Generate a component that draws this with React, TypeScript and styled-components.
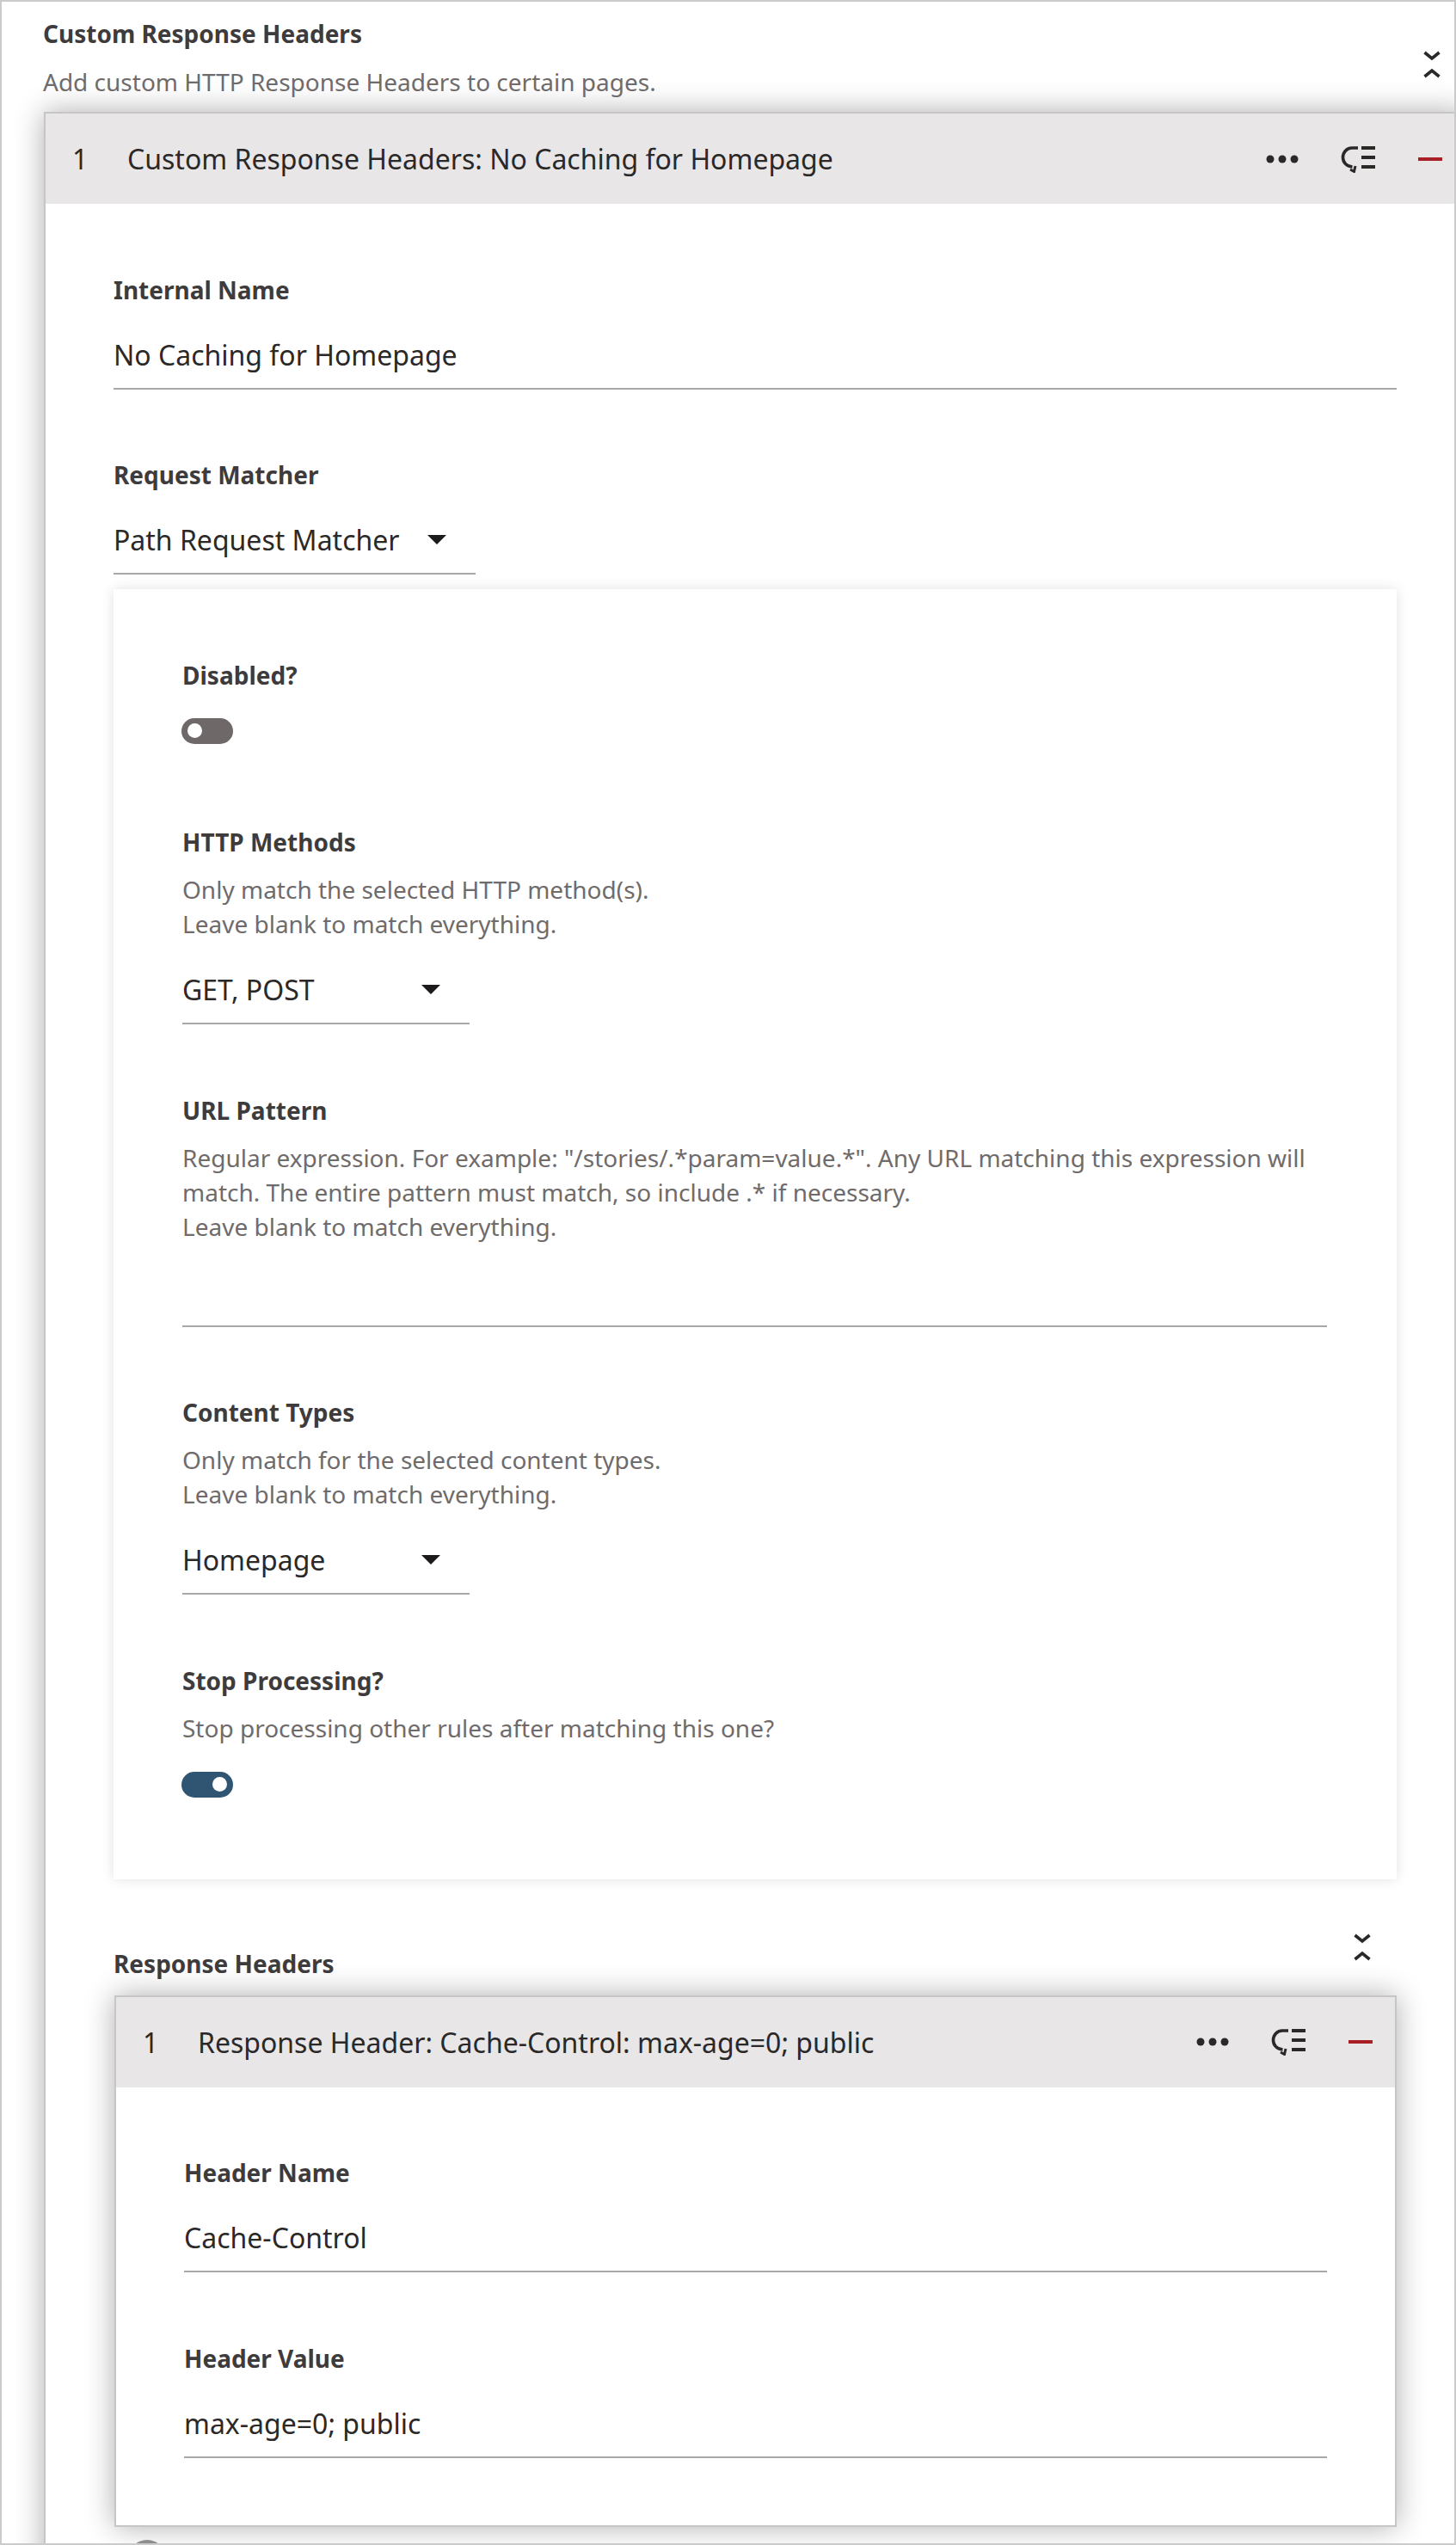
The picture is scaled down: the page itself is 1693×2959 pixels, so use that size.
import React from 'react';
import styled, { createGlobalStyle } from 'styled-components';

const GlobalStyle = createGlobalStyle`
  html, body {
    margin: 0;
    padding: 0;
    background: #fff;
  }
  * {
    box-sizing: border-box;
  }
`;

function ChevronsIcon() {
  return (
    <svg width="20" height="34" viewBox="0 0 20 34" fill="none" stroke="#2b2828" strokeWidth="3.6">
      <path d="M1.5 3l8.5 7 8.5-7" />
      <path d="M1.5 31l8.5-7 8.5 7" />
    </svg>
  );
}

function DotsIcon() {
  return (
    <svg width="38" height="10" viewBox="0 0 38 10" fill="#2b2828">
      <circle cx="5" cy="5" r="4.5" />
      <circle cx="19" cy="5" r="4.5" />
      <circle cx="33" cy="5" r="4.5" />
    </svg>
  );
}

function CollapseAllIcon() {
  return (
    <svg width="41" height="32" viewBox="0 0 41 32" fill="none" stroke="#2b2828">
      <path d="M20 3h-7C6.500 3 2.500 8.500 2.500 14s4 10.500 11 11" strokeWidth="3.6" />
      <path d="M11 28l4.500 2.500 1.500-6.500" strokeWidth="3" />
      <path d="M24 3h16M24 14h16M24 25h16" strokeWidth="4" />
    </svg>
  );
}

function MinusIcon() {
  return (
    <svg width="28" height="4" viewBox="0 0 28 4">
      <rect width="28" height="4" fill="#a81f25" />
    </svg>
  );
}

function Caret() {
  return (
    <svg width="22" height="11" viewBox="0 0 22 11">
      <path d="M0 0h22L11 11z" fill="#1c1a1a" />
    </svg>
  );
}

type RepeaterProps = {
  title: string;
  children: React.ReactNode;
};

function RepeaterCard({ title, children }: RepeaterProps) {
  return (
    <Card>
      <CardHeader>
        <CardNumber>1</CardNumber>
        <CardTitle>{title}</CardTitle>
        <CardActions>
          <DotsIcon />
          <CollapseAllIcon />
          <MinusIcon />
        </CardActions>
      </CardHeader>
      <CardBody>{children}</CardBody>
    </Card>
  );
}

export default function App() {
  return (
    <>
      <GlobalStyle />
      <Frame>
        <Head>
          <div>
            <Label>Custom Response Headers</Label>
            <HeadDescription>Add custom HTTP Response Headers to certain pages.</HeadDescription>
          </div>
          <ChevronsIcon />
        </Head>

        <OuterWrap>
          <RepeaterCard title="Custom Response Headers: No Caching for Homepage">
            <Field>
              <Label>Internal Name</Label>
              <Input>No Caching for Homepage</Input>
            </Field>

            <Field>
              <Label>Request Matcher</Label>
              <Select $width={421}>
                Path Request Matcher
                <Caret />
              </Select>
            </Field>

            <Panel>
              <ToggleField>
                <Label>Disabled?</Label>
                <Toggle />
              </ToggleField>

              <Field>
                <Label>HTTP Methods</Label>
                <Description>
                  Only match the selected HTTP method(s).
                  <br />
                  Leave blank to match everything.
                </Description>
                <Select $width={334}>
                  GET, POST
                  <Caret />
                </Select>
              </Field>

              <Field>
                <Label>URL Pattern</Label>
                <Description>
                  Regular expression. For example: "/stories/.*param=value.*". Any URL matching this expression will
                  <br />
                  match. The entire pattern must match, so include .* if necessary.
                  <br />
                  Leave blank to match everything.
                </Description>
                <Input />
              </Field>

              <Field>
                <Label>Content Types</Label>
                <Description>
                  Only match for the selected content types.
                  <br />
                  Leave blank to match everything.
                </Description>
                <Select $width={334}>
                  Homepage
                  <Caret />
                </Select>
              </Field>

              <ToggleField>
                <Label>Stop Processing?</Label>
                <Description>Stop processing other rules after matching this one?</Description>
                <Toggle $on />
              </ToggleField>
            </Panel>

            <RepeaterHead>
              <Label>Response Headers</Label>
              <ChevronsIcon />
            </RepeaterHead>

            <InnerWrap>
              <RepeaterCard title="Response Header: Cache-Control: max-age=0; public">
                <Field>
                  <Label>Header Name</Label>
                  <Input>Cache-Control</Input>
                </Field>
                <Field>
                  <Label>Header Value</Label>
                  <Input>max-age=0; public</Input>
                </Field>
              </RepeaterCard>
            </InnerWrap>

            <AddButton />
          </RepeaterCard>
        </OuterWrap>
      </Frame>
    </>
  );
}

const Frame = styled.div`
  height: 2959px;
  border: 2px solid #cbcbcb;
  overflow: hidden;
  font-family: "Noto Sans", "Open Sans", sans-serif;
  background: #fff;
`;

const Head = styled.header`
  display: flex;
  justify-content: space-between;
  padding: 18px 16px 0 48px;
  svg {
    margin-top: 38px;
  }
`;

const Label = styled.div`
  font-size: 28px;
  line-height: 38px;
  font-weight: 700;
  color: #3e3b3c;
`;

const Description = styled.div`
  margin: 16px 0 1px;
  font-size: 28px;
  line-height: 40px;
  color: #6f6b6b;
`;

const HeadDescription = styled(Description)`
  margin: 18px 0 0;
  line-height: 38px;
`;

const OuterWrap = styled.div`
  margin: 16px -14px 0 49px;
`;

const InnerWrap = styled.div`
  padding-left: 1px;
`;

const Card = styled.section`
  border: 2px solid #c6c6c6;
  background: #fff;
  box-shadow: 0 0 32px rgba(0, 0, 0, 0.32);
`;

const CardHeader = styled.div`
  display: flex;
  align-items: center;
  height: 105px;
  padding: 0 26px 0 31px;
  background: #e8e6e7;
`;

const CardNumber = styled.span`
  width: 64px;
  font-size: 32px;
  color: #2b2828;
`;

const CardTitle = styled.span`
  flex: 1;
  font-size: 32px;
  color: #2b2828;
`;

const CardActions = styled.div`
  display: flex;
  align-items: center;
  gap: 49px;
`;

const CardBody = styled.div`
  padding: 0 79px 78px;
`;

const Field = styled.div`
  padding-top: 80.5px;
`;

const ToggleField = styled(Field)`
  padding-bottom: 16px;
`;

const Input = styled.div`
  display: flex;
  align-items: center;
  height: 79px;
  margin-top: 18px;
  border-bottom: 2px solid #a9a7a8;
  font-size: 32px;
  color: #2b2828;
`;

const Select = styled(Input)<{ $width: number }>`
  justify-content: space-between;
  width: ${(p) => p.$width}px;
  padding-right: 34px;
`;

const Panel = styled.div`
  margin-top: 17px;
  padding: 0 81px 80px 80px;
  background: #fff;
  box-shadow: 0 0 14px rgba(0, 0, 0, 0.12);
`;

const Toggle = styled.div<{ $on?: boolean }>`
  display: flex;
  align-items: center;
  justify-content: ${(p) => (p.$on ? 'flex-end' : 'flex-start')};
  width: 60px;
  height: 30px;
  margin: 31px 0 -1px -1px;
  padding: 0 7px;
  border-radius: 15px;
  background: ${(p) => (p.$on ? '#2f5573' : '#6e6868')};
  &::after {
    content: '';
    width: 17px;
    height: 17px;
    border-radius: 50%;
    background: #fff;
  }
`;

const RepeaterHead = styled.div`
  display: flex;
  align-items: flex-end;
  justify-content: space-between;
  min-height: 55px;
  margin: 62px 0 18px;
  padding-right: 30px;
  svg {
    align-self: flex-start;
  }
`;

const AddButton = styled.div`
  width: 44px;
  height: 44px;
  margin: 15px 0 0 17px;
  border-radius: 50%;
  background: #8f8d8e;
`;
